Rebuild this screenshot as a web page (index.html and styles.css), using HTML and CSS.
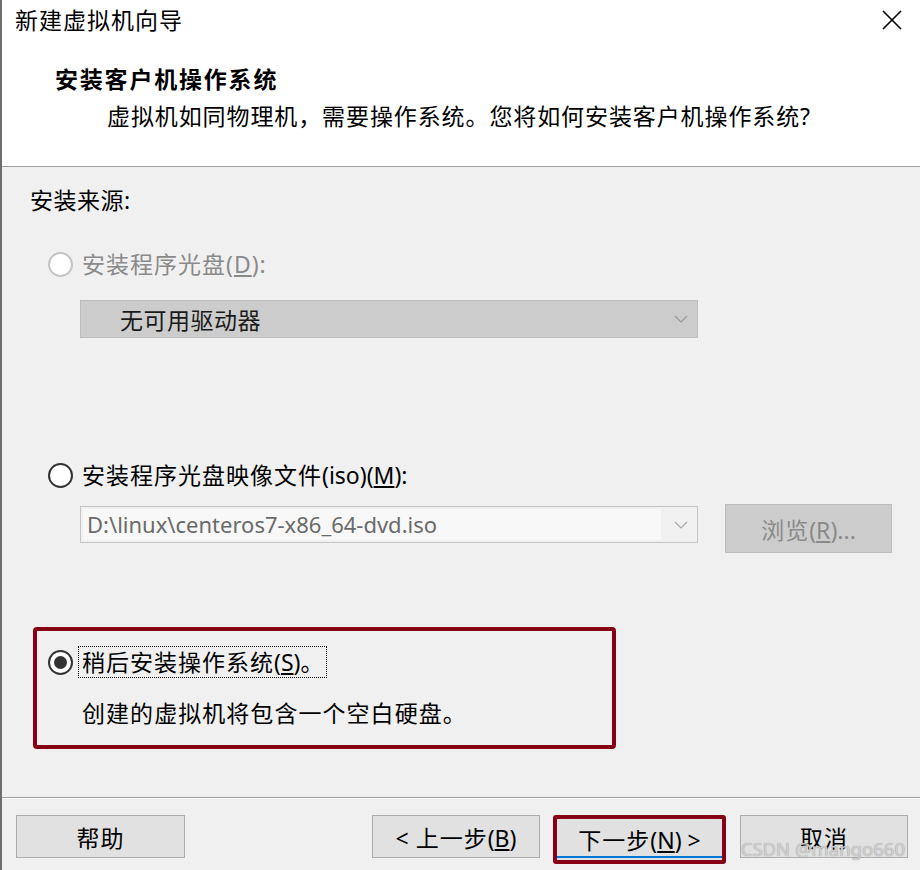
FILE: index.html
```html
<!DOCTYPE html>
<html lang="zh-CN">
<head>
<meta charset="utf-8">
<title>新建虚拟机向导</title>
<link rel="stylesheet" href="styles.css">
</head>
<body>
<div class="window">
  <header class="head">
    <div class="titlebar">
      <span class="title">新建虚拟机向导</span>
      <svg class="close" width="20" height="20" viewBox="0 0 20 20"><path d="M1 1 L19 19 M19 1 L1 19" stroke="#000" stroke-width="1.6" fill="none"/></svg>
    </div>
    <div class="heading">安装客户机操作系统</div>
    <div class="subtitle">虚拟机如同物理机，需要操作系统。您将如何安装客户机操作系统?</div>
  </header>

  <main class="body">
    <div class="section-label">安装来源:</div>

    <div class="option disabled">
      <span class="radio"></span>
      <span class="opt-text">安装程序光盘(<u>D</u>):</span>
    </div>
    <div class="combo disabled-combo">
      <span class="combo-text">无可用驱动器</span>
      <svg class="chev" width="14" height="8" viewBox="0 0 14 8"><path d="M1 1 L7 7 L13 1" stroke="#9a9a9a" stroke-width="1.2" fill="none"/></svg>
    </div>

    <div class="option option-iso">
      <span class="radio"></span>
      <span class="opt-text">安装程序光盘映像文件<span class="latin">(iso)(<u>M</u>):</span></span>
    </div>
    <div class="iso-row">
      <div class="combo iso-input">
        <span class="iso-field">D:\linux\centeros7-x86_64-dvd.iso</span>
        <svg class="chev" width="14" height="8" viewBox="0 0 14 8"><path d="M1 1 L7 7 L13 1" stroke="#a8a8a8" stroke-width="1.2" fill="none"/></svg>
      </div>
      <div class="btn browse"><span>浏览<span class="latin">(<u>R</u>)...</span></span></div>
    </div>

    <div class="highlight">
      <div class="option">
        <span class="radio checked"></span>
        <span class="opt-text focus">稍后安装操作系统<span class="latin">(<u>S</u>)</span>。</span>
      </div>
      <div class="desc">创建的虚拟机将包含一个空白硬盘。</div>
    </div>
  </main>

  <footer class="foot">
    <div class="btn help"><span>帮助</span></div>
    <div class="spacer"></div>
    <div class="btn back"><span><span class="latin">&lt;</span>&nbsp;上一步<span class="latin">(<u>B</u>)</span></span></div>
    <div class="btn next"><span>下一步<span class="latin">(<u>N</u>)&nbsp;&gt;</span></span></div>
    <div class="btn cancel"><span>取消</span></div>
    <div class="watermark">CSDN @mango660</div>
  </footer>
</div>
</body>
</html>
```

FILE: styles.css
```css
* { box-sizing: border-box; }

html, body {
  margin: 0;
  padding: 0;
  background: #f0f0f0;
}

body {
  font-family: "Noto Sans", "Noto Sans CJK SC", sans-serif;
  color: #000;
}

.window {
  width: 920px;
  height: 870px;
  border-left: 2px solid #6e6e6e;
  display: flex;
  flex-direction: column;
  position: relative;
  overflow: hidden;
}

/* ---------- header ---------- */
.head {
  height: 167px;
  background: #fff;
  border-bottom: 1px solid #a0a0a0;
  display: flex;
  flex-direction: column;
  flex-shrink: 0;
}

.titlebar {
  height: 40px;
  display: flex;
  align-items: center;
  justify-content: space-between;
  padding: 0 18px 0 13px;
}

.title {
  font-size: 23px;
  letter-spacing: 1px;
  line-height: 30px;
}

.close { display: block; }

.heading {
  margin-top: 24px;
  padding-left: 53px;
  font-size: 23px;
  font-weight: bold;
  letter-spacing: 1.8px;
  line-height: 30px;
}

.subtitle {
  margin-top: 7px;
  padding-left: 105px;
  font-size: 23px;
  letter-spacing: 0.9px;
  line-height: 30px;
}

/* ---------- body ---------- */
.body {
  height: 630px;
  flex-shrink: 0;
  padding: 18px 0 0 28px;
  display: flex;
  flex-direction: column;
  align-items: flex-start;
}

.section-label {
  font-size: 23px;
  letter-spacing: 0.5px;
  line-height: 30px;
}

.option {
  display: flex;
  align-items: center;
  height: 30px;
  margin-left: 18px;
  margin-top: 34px;
  font-size: 23px;
  line-height: 30px;
  letter-spacing: 1px;
}

.option-iso { margin-top: 122px; }

.radio {
  width: 25px;
  height: 25px;
  border-radius: 50%;
  border: 2px solid #333;
  background: #fff;
  margin-right: 9px;
  flex-shrink: 0;
  display: flex;
  align-items: center;
  justify-content: center;
}

.radio.checked::after {
  content: "";
  width: 13px;
  height: 13px;
  border-radius: 50%;
  background: #333;
}

.disabled { color: #8a8a8a; }
.disabled .radio { border-color: #c4c4c4; }

.latin { letter-spacing: 0; }

.combo {
  position: relative;
  width: 618px;
  height: 38px;
  margin-left: 50px;
  display: flex;
  align-items: center;
  justify-content: space-between;
}

.disabled-combo {
  margin-top: 21px;
  background: #cccccc;
  border: 1px solid #bdbdbd;
  padding: 0 9px 0 39px;
}

.combo-text {
  font-size: 23px;
  letter-spacing: 0.5px;
  color: #1a1a1a;
}

.chev { display: block; }

.iso-row {
  display: flex;
  align-items: flex-start;
  margin-top: 14px;
}

.iso-input {
  margin-top: 2px;
  height: 37px;
  background: #f0f0f0;
  border: 1px solid #c6c6c6;
  padding: 2px 9px 2px 2px;
}

.iso-field {
  width: 578px;
  height: 31px;
  background: #f8f8f8;
  font-size: 22px;
  line-height: 31px;
  color: #6a6a6a;
  padding-left: 4px;
  white-space: nowrap;
  overflow: hidden;
}

.btn {
  display: flex;
  align-items: center;
  justify-content: center;
  height: 43px;
  background: #e1e1e1;
  border: 1px solid #adadad;
  font-size: 23px;
  letter-spacing: 1px;
  white-space: nowrap;
}

.browse {
  width: 167px;
  height: 49px;
  margin-left: 27px;
  background: #cccccc;
  border-color: #bdbdbd;
  color: #8a8a8a;
}

.highlight {
  margin-top: 74px;
  margin-left: 3px;
  width: 583px;
  height: 122px;
  border: 4px solid #880015;
  border-radius: 4px;
  padding: 16px 0 0 11px;
}

.highlight .option { margin: 0; }

.focus {
  outline: 1px dotted #000;
  outline-offset: 0;
  margin-left: -3px;
  padding: 0 2px 0 3px;
}

.desc {
  margin-top: 21px;
  margin-left: 34px;
  font-size: 23px;
  line-height: 30px;
  letter-spacing: 1.05px;
}

/* ---------- footer ---------- */
.foot {
  flex: 1;
  border-top: 1px solid #a0a0a0;
  box-shadow: inset 0 1px 0 #ffffff;
  display: flex;
  align-items: flex-start;
  padding: 17px 12px 0 14px;
  position: relative;
}

.help { width: 169px; }
.spacer { flex: 1; }
.back { width: 168px; }

.next {
  width: 173px;
  height: 49px;
  margin-left: 13px;
  border: 4px solid #880015;
  border-radius: 3px;
  background: linear-gradient(to top, #e1e1e1 0, #e1e1e1 2px, #0078d7 2px, #0078d7 4px, #e1e1e1 4px);
  padding-bottom: 2px;
}

.cancel {
  width: 168px;
  margin-left: 14px;
}

.watermark {
  position: absolute;
  right: 15px;
  bottom: 9px;
  font-family: "Noto Sans", sans-serif;
  font-size: 18.5px;
  letter-spacing: 0;
  color: rgba(215, 215, 215, 0.9);
  text-shadow: 0 0 1px #8a8a8a;
}
```
